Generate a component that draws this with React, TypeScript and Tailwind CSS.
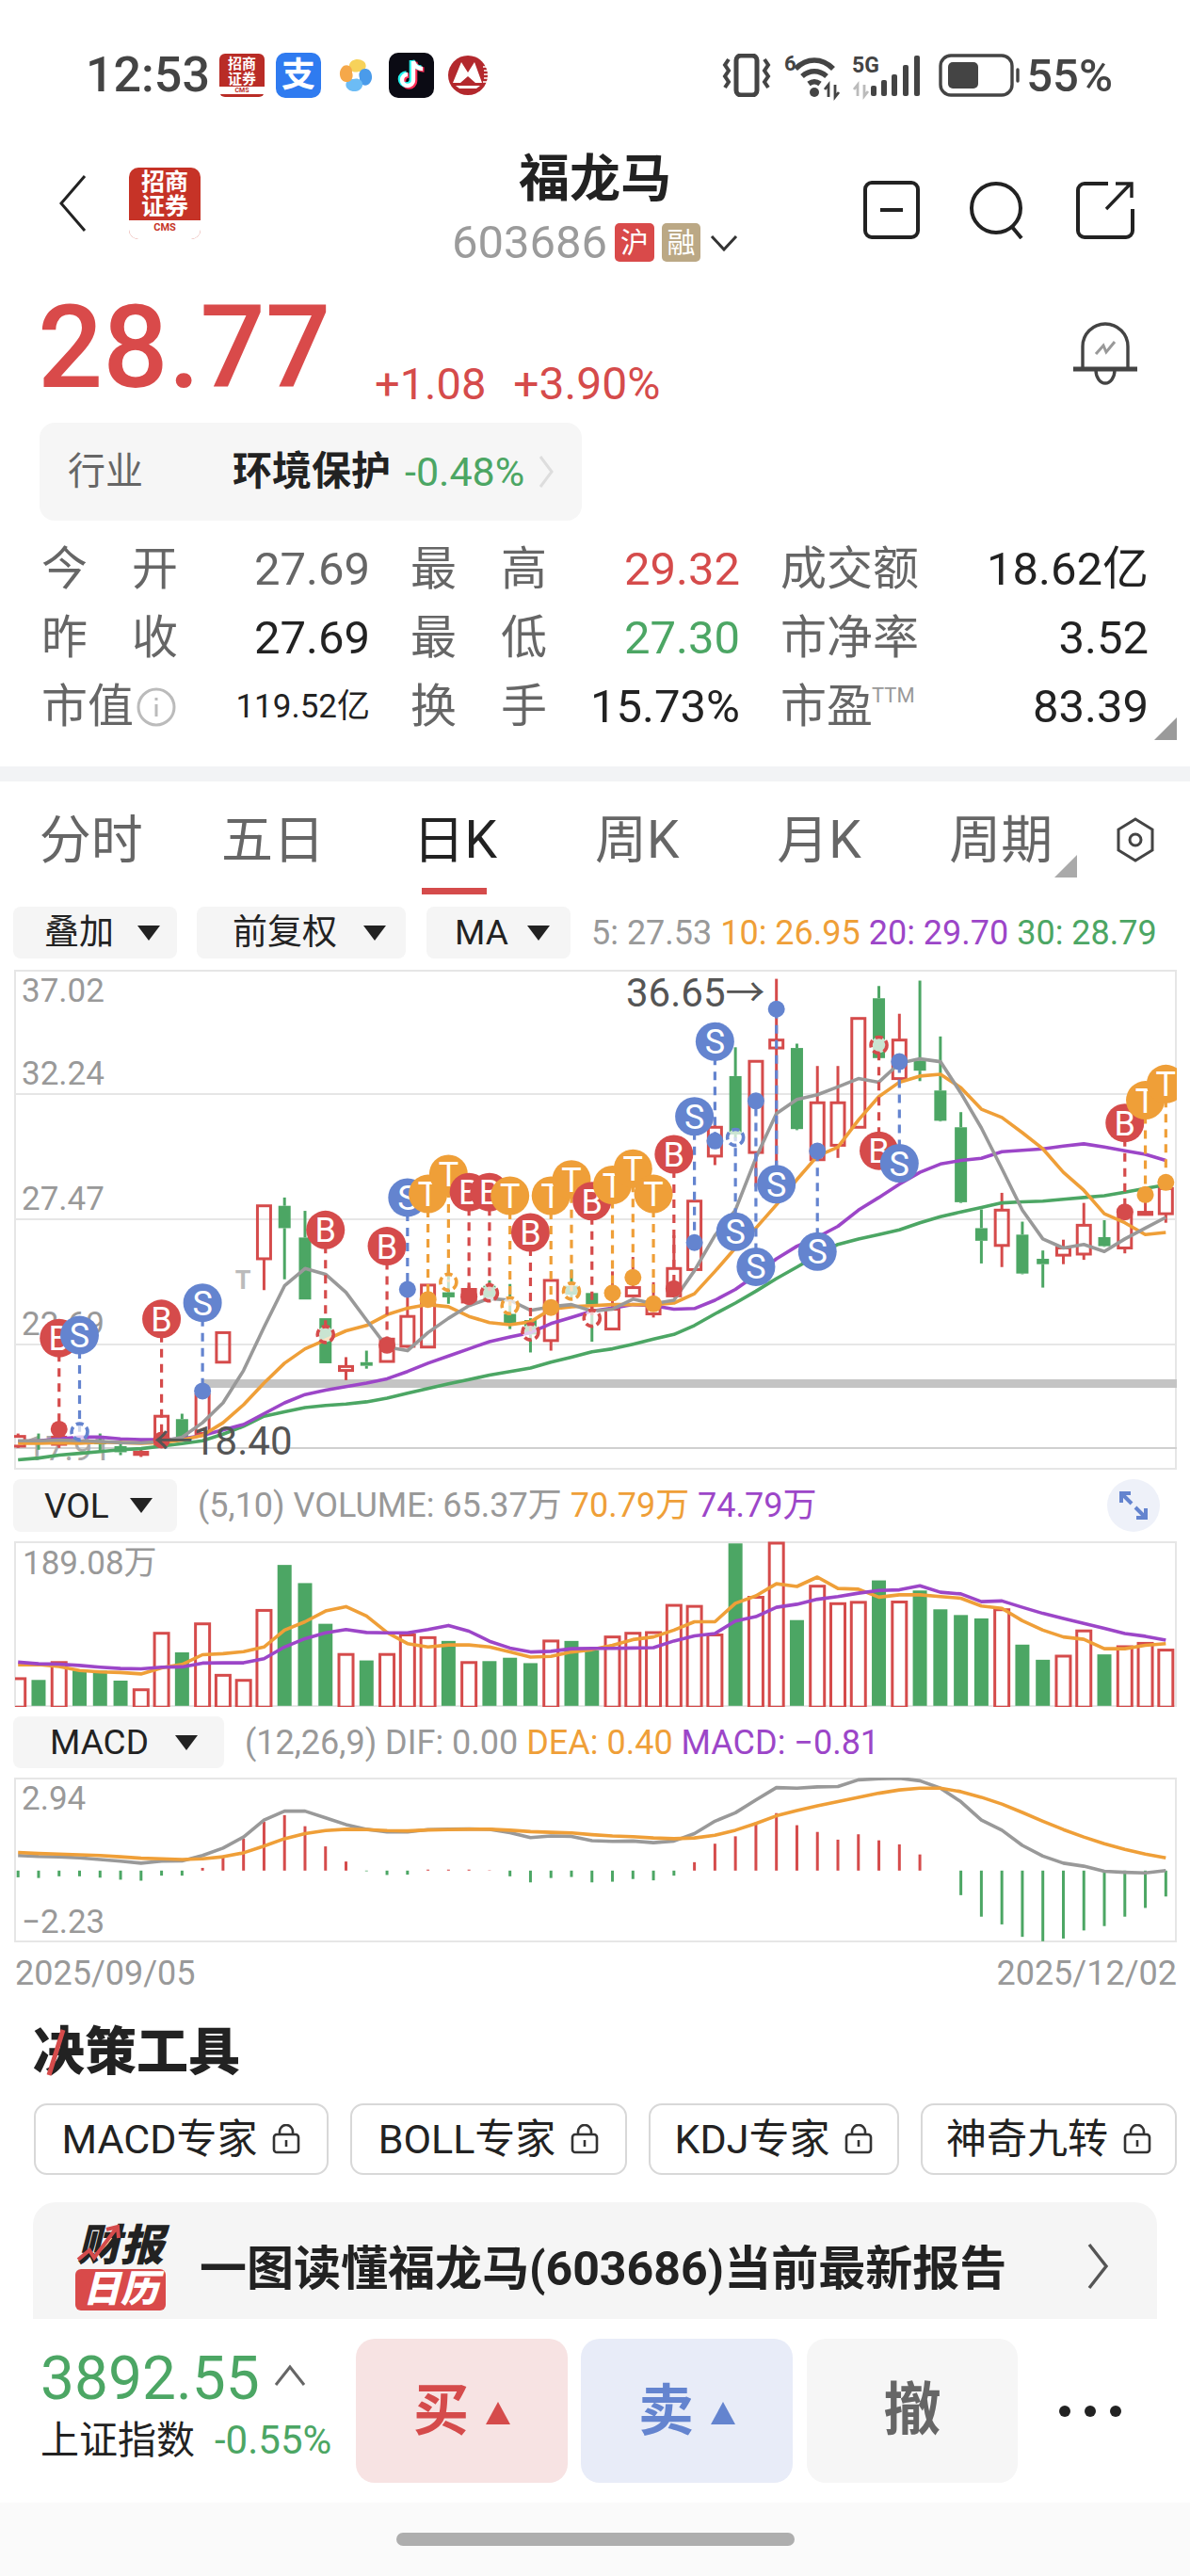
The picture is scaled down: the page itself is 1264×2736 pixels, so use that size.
import * as React from 'react';

const RED = '#d54b4b';
const GREEN = '#4ca664';
const BLUE = '#6484cf';
const ORANGE = '#ef9f38';
const PURPLE = '#9c46c8';
const GREY = '#999999';

// y values below were read off the picture, converted to page pixels here
const cx = (i: number) => 19.2 + 21.77 * i;
const py = (y: number) => 960 + y / 2.613;
const vy = (y: number) => 1560 + y / 2.8;

// index, colour, wick top, body top, body bottom, wick bottom
type Candle = [number, 'r' | 'g', number, number, number, number];
const candles: Candle[] = [
    [0, 'r', 1470, 1478, 1505, 1510],
    [1, 'g', 1470, 1490, 1497, 1515],
    [2, 'r', 1470, 1480, 1500, 1510],
    [4, 'g', 1470, 1490, 1500, 1520],
    [5, 'g', 1490, 1505, 1522, 1530],
    [6, 'r', 1510, 1522, 1528, 1535],
    [7, 'r', 1420, 1422, 1500, 1505],
    [8, 'g', 1415, 1430, 1480, 1485],
    [9, 'r', 1360, 1362, 1470, 1472],
    [10, 'r', 1190, 1190, 1272, 1272],
    [12, 'r', 838, 838, 985, 1072],
    [13, 'g', 815, 838, 900, 1042],
    [14, 'g', 852, 926, 1098, 1098],
    [15, 'g', 1150, 1150, 1275, 1275],
    [16, 'r', 1258, 1284, 1295, 1322],
    [17, 'g', 1240, 1272, 1282, 1290],
    [18, 'r', 1205, 1208, 1270, 1272],
    [19, 'r', 1090, 1145, 1228, 1232],
    [20, 'r', 1058, 1058, 1230, 1230],
    [21, 'g', 1000, 1078, 1092, 1110],
    [22, 'r', 1060, 1070, 1105, 1110],
    [23, 'g', 1045, 1060, 1095, 1105],
    [24, 'g', 1055, 1138, 1165, 1180],
    [25, 'g', 1150, 1155, 1195, 1245],
    [26, 'r', 1045, 1045, 1212, 1240],
    [27, 'g', 1015, 1060, 1085, 1095],
    [28, 'g', 1080, 1080, 1112, 1215],
    [29, 'r', 1020, 1125, 1180, 1182],
    [30, 'r', 980, 1065, 1088, 1090],
    [31, 'r', 1050, 1115, 1138, 1148],
    [32, 'r', 920, 1012, 1088, 1092],
    [33, 'r', 825, 825, 1015, 1017],
    [34, 'r', 600, 620, 700, 725],
    [35, 'g', 398, 478, 640, 650],
    [36, 'r', 437, 437, 690, 785],
    [37, 'r', 208, 378, 400, 725],
    [38, 'g', 388, 400, 625, 628],
    [39, 'r', 450, 552, 710, 712],
    [40, 'r', 450, 552, 670, 705],
    [41, 'r', 318, 318, 620, 622],
    [42, 'g', 228, 262, 428, 432],
    [43, 'r', 305, 378, 485, 498],
    [44, 'g', 213, 435, 463, 492],
    [45, 'g', 368, 518, 602, 604],
    [46, 'g', 578, 620, 828, 830],
    [47, 'g', 848, 900, 935, 998],
    [48, 'r', 802, 850, 948, 1008],
    [49, 'g', 882, 918, 1026, 1028],
    [50, 'g', 962, 985, 1000, 1065],
    [51, 'r', 932, 955, 975, 1000],
    [52, 'r', 830, 892, 972, 988],
    [53, 'g', 878, 925, 950, 952],
    [54, 'r', 850, 855, 955, 970],
    [55, 'r', 810, 856, 862, 865],
    [56, 'r', 770, 790, 860, 885],
];

const ma5 = [1490, 1490, 1488, 1490, 1492, 1495, 1496, 1492, 1480, 1440, 1385, 1295, 1175, 1060, 1012, 1028, 1078, 1155, 1230, 1240, 1190, 1150, 1115, 1095, 1100, 1128, 1118, 1112, 1130, 1125, 1097, 1110, 1100, 1018, 920, 850, 705, 582, 543, 530, 508, 485, 495, 442, 430, 438, 525, 622, 735, 850, 930, 955, 945, 965, 930, 900, 870];
const ma10 = [1497, 1497, 1496, 1497, 1494, 1495, 1497, 1495, 1488, 1475, 1440, 1390, 1330, 1275, 1235, 1210, 1185, 1170, 1140, 1122, 1112, 1118, 1145, 1162, 1168, 1160, 1125, 1118, 1115, 1112, 1112, 1112, 1108, 1082, 1020, 955, 900, 835, 765, 700, 675, 600, 535, 495, 478, 473, 510, 570, 593, 635, 680, 745, 795, 860, 885, 918, 912];
const ma20 = [1492, 1490, 1485, 1480, 1480, 1485, 1487, 1487, 1485, 1475, 1460, 1445, 1415, 1385, 1362, 1350, 1340, 1330, 1318, 1298, 1275, 1255, 1235, 1215, 1202, 1190, 1165, 1148, 1130, 1122, 1112, 1115, 1125, 1123, 1100, 1070, 1030, 985, 950, 925, 895, 850, 815, 778, 745, 722, 712, 706, 688, 684, 680, 672, 666, 675, 685, 695, 712];
const ma30 = [1543, 1538, 1530, 1525, 1520, 1515, 1512, 1505, 1498, 1490, 1472, 1450, 1422, 1410, 1398, 1392, 1388, 1382, 1372, 1358, 1345, 1332, 1320, 1308, 1298, 1288, 1272, 1258, 1243, 1235, 1222, 1208, 1195, 1170, 1138, 1108, 1075, 1040, 1008, 975, 945, 930, 918, 905, 885, 868, 855, 843, 830, 827, 825, 820, 815, 810, 800, 790, 780];

// index, letter, badge centre, dot centre, hollow dot
type Badge = [number, 'B' | 'S' | 'T', number, number, boolean];
const badges: Badge[] = [
    [2, 'B', 1205, 1458, false],
    [3, 'S', 1197, 1465, true],
    [7, 'B', 1152, 1488, false],
    [9, 'S', 1107, 1352, false],
    [15, 'B', 905, 1195, true],
    [18, 'B', 950, 1225, false],
    [19, 'S', 815, 1070, false],
    [20, 'T', 805, 1098, false],
    [21, 'T', 750, 1050, true],
    [22, 'B', 800, 1090, false],
    [23, 'B', 800, 1080, true],
    [24, 'T', 810, 1115, true],
    [25, 'B', 912, 1188, true],
    [26, 'T', 810, 1120, false],
    [27, 'T', 765, 1075, true],
    [28, 'B', 825, 1150, true],
    [29, 'T', 780, 1080, false],
    [30, 'T', 735, 1037, false],
    [31, 'T', 805, 1110, false],
    [32, 'B', 695, 1068, false],
    [33, 'S', 590, 940, false],
    [34, 'S', 382, 658, false],
    [35, 'S', 910, 648, true],
    [36, 'S', 1007, 547, false],
    [37, 'S', 778, 292, false],
    [39, 'S', 965, 686, false],
    [42, 'B', 685, 392, true],
    [43, 'S', 720, 438, false],
    [54, 'B', 608, 855, false],
    [55, 'T', 545, 807, false],
    [56, 'T', 500, 773, false],
];

const volTops = [620, 628, 572, 600, 600, 630, 653, 485, 546, 457, 610, 625, 417, 286, 340, 461, 548, 570, 548, 490, 498, 512, 572, 572, 562, 578, 508, 512, 540, 496, 485, 483, 402, 405, 490, 222, 378, 217, 450, 345, 397, 393, 332, 392, 362, 418, 435, 445, 415, 523, 568, 553, 478, 552, 525, 515, 535];
const volGreen = [1, 3, 4, 5, 8, 13, 14, 15, 17, 21, 23, 24, 25, 27, 28, 35, 38, 42, 44, 45, 46, 47, 49, 50, 53];
const volMa5 = [583, 582, 588, 600, 604, 606, 610, 592, 582, 553, 550, 544, 530, 480, 455, 423, 410, 438, 487, 520, 530, 524, 524, 530, 545, 560, 558, 545, 538, 525, 508, 500, 480, 455, 455, 400, 378, 342, 350, 322, 356, 358, 382, 375, 375, 380, 385, 408, 415, 452, 480, 500, 507, 535, 535, 525, 520];
const volMa10 = [575, 580, 581, 585, 590, 594, 595, 590, 589, 578, 577, 577, 565, 530, 505, 488, 478, 487, 488, 488, 478, 466, 483, 513, 533, 545, 543, 535, 534, 534, 533, 532, 512, 497, 490, 453, 440, 412, 403, 388, 380, 370, 362, 360, 348, 367, 372, 395, 393, 412, 430, 445, 460, 475, 490, 498, 510];

const macdBars = [1215, 1217, 1212, 1212, 1216, 1222, 1225, 1210, 1210, 1187, 1150, 1100, 1050, 1030, 1063, 1123, 1168, 1197, 1208, 1207, 1192, 1192, 1192, 1194, 1212, 1230, 1217, 1214, 1230, 1228, 1220, 1224, 1210, 1170, 1115, 1093, 1052, 1024, 1060, 1080, 1103, 1087, 1105, 1117, 1147, 1195, 1268, 1332, 1355, 1392, 1405, 1397, 1373, 1360, 1332, 1306, 1272];
const dif = [1150, 1153, 1154, 1157, 1162, 1167, 1173, 1167, 1166, 1150, 1128, 1095, 1045, 1018, 1018, 1038, 1058, 1072, 1080, 1080, 1073, 1072, 1071, 1072, 1082, 1097, 1092, 1093, 1106, 1108, 1107, 1112, 1107, 1085, 1048, 1023, 985, 948, 950, 946, 945, 925, 922, 920, 928, 950, 990, 1045, 1075, 1120, 1152, 1173, 1182, 1197, 1200, 1202, 1195];
const dea = [1141, 1144, 1146, 1148, 1150, 1154, 1158, 1160, 1162, 1160, 1154, 1142, 1122, 1100, 1085, 1076, 1072, 1073, 1076, 1077, 1074, 1073, 1072, 1072, 1075, 1079, 1081, 1083, 1088, 1092, 1094, 1098, 1100, 1098, 1090, 1075, 1055, 1032, 1016, 1002, 990, 977, 965, 955, 950, 950, 960, 977, 997, 1022, 1048, 1073, 1095, 1115, 1132, 1146, 1157];

const points = (ys: number[], conv: (y: number) => number) =>
    ys.map((y, i) => cx(i).toFixed(1) + ',' + conv(y).toFixed(1)).join(' ');

const Line = (props: { ys: number[]; conv: (y: number) => number; color: string }) => (
    <polyline points={points(props.ys, props.conv)} fill="none" stroke={props.color} strokeWidth={3.6} strokeLinejoin="round" />
);

const Caret = () => (
    <svg width="24" height="16" viewBox="0 0 24 16"><path d="M0 0h24L12 16z" fill="#222" /></svg>
);

const Lock = () => (
    <svg width="30" height="32" viewBox="0 0 30 32" fill="none" stroke="#333" strokeWidth="2.6" className="ml-[16px]">
        <rect x="2" y="11" width="26" height="19" rx="3" />
        <path d="M8 11V8a7 7 0 0 1 14 0v3" />
        <path d="M15 17v7" />
    </svg>
);

const Dropdown = (props: { label: string; className: string; caretGap: string }) => (
    <div className={'flex items-center h-[55px] bg-[#f5f5f5] rounded-[8px] text-[37px] text-[#222] ' + props.className}>
        <span className="leading-none">{props.label}</span>
        <span className={props.caretGap}><Caret /></span>
    </div>
);

const petal = 'M21 14C16 16 10 13 11 7c1-6 10-8 15-4 4 3 3 8 0 10-2 1-3 1-5 1z';

const StatusBar = () => (
    <div className="h-[160px] flex items-center pl-[91px] pr-[82px] text-[#444]">
        <span className="text-[52px] font-medium w-[142px] leading-none">12:53</span>
        <div className="w-[48px] h-[46px] bg-[#b92c26] rounded-[6px] flex flex-col items-center justify-center text-white text-[15px] leading-[16px] font-bold">
            <span>招商</span>
            <span>证券</span>
            <span className="text-[7px] leading-[8px] text-[#b92c26] bg-white w-full text-center">CMS</span>
        </div>
        <div className="ml-[12px] w-[48px] h-[48px] bg-[#2f7bf0] rounded-[10px] flex items-center justify-center text-white text-[36px] font-bold leading-none">支</div>
        <svg width="36" height="36" viewBox="0 0 36 36" className="ml-[19px]">
            <path d={petal} fill="#f7d25a" />
            <path d={petal} fill="#4a9bea" transform="rotate(90 18 18)" />
            <path d={petal} fill="#6cbcf5" transform="rotate(180 18 18)" />
            <path d={petal} fill="#f5a84a" transform="rotate(270 18 18)" />
        </svg>
        <svg width="48" height="48" viewBox="0 0 48 48" className="ml-[17px]">
            <rect width="48" height="48" rx="10" fill="#0b0b14" />
            <path d="M26 9v20a6 6 0 1 1-6-6M26 9c1 5 5 8 10 8" fill="none" stroke="#fe2c55" strokeWidth="5.6" transform="translate(1.5 1)" />
            <path d="M26 9v20a6 6 0 1 1-6-6M26 9c1 5 5 8 10 8" fill="none" stroke="#25f4ee" strokeWidth="5.6" transform="translate(-1.5 -1)" />
            <path d="M26 9v20a6 6 0 1 1-6-6M26 9c1 5 5 8 10 8" fill="none" stroke="#fff" strokeWidth="4.4" />
        </svg>
        <svg width="42" height="42" viewBox="0 0 42 42" className="ml-[15px]">
            <circle cx="21" cy="21" r="21" fill="#b3282d" />
            <path d="M5 29 14 7l7 11 7-11 8 22H29l-8-7-8 7z" fill="#fff" />
            <path d="M8 32h26l-4 3H12z" fill="#fff" />
            <path d="M37 12h5M38 16h4M38 20h4M38 24h4M37 28h4" stroke="#fff" strokeWidth="1.6" />
        </svg>
        <div className="flex-1" />
        <svg width="52" height="46" viewBox="0 0 52 46" fill="none" stroke="#444" strokeWidth="3.6">
            <rect x="15" y="2" width="22" height="42" rx="5" strokeWidth="5" />
            <path d="M7 6 3 12l4 6-4 6 4 6-4 6M45 6l4 6-4 6 4 6-4 6 4 6" strokeWidth="4" />
        </svg>
        <svg width="64" height="46" viewBox="0 0 64 46" fill="none" stroke="#444" className="ml-[13px] overflow-visible">
            <path d="M13 16c12-12 28-12 40 0M20 24c8-7 18-7 26 0M27 32c4-3 8-3 12 0" strokeWidth="5.6" />
            <circle cx="33" cy="41" r="5" fill="#444" stroke="none" />
            <text x="1" y="18" fontSize="22" fontWeight="700" fill="#444" stroke="none">6</text>
            <path d="M48 46V33l-4 5M55 33v13l4-5" strokeWidth="2.8" />
        </svg>
        <svg width="74" height="46" viewBox="0 0 74 46" className="ml-[9px] overflow-visible" fill="#444">
            <text x="0" y="20" fontSize="23" fontWeight="700">5G</text>
            <path d="M6 45V33l-4 5M13 33v12l4-5" stroke="#bbb" strokeWidth="2.8" fill="none" />
            <rect x="20" y="34" width="6" height="11" rx="2" />
            <rect x="31" y="28" width="6" height="17" rx="2" />
            <rect x="42" y="22" width="6" height="23" rx="2" />
            <rect x="54" y="12" width="6" height="33" rx="2" />
            <rect x="66" y="2" width="6" height="43" rx="2" />
        </svg>
        <svg width="87" height="46" viewBox="0 0 87 46" className="ml-[18px]" fill="none">
            <rect x="2" y="2" width="76" height="42" rx="11" stroke="#444" strokeWidth="3.4" />
            <rect x="10" y="9" width="32" height="28" rx="5" fill="#444" />
            <path d="M84 17v12" stroke="#444" strokeWidth="3.4" strokeLinecap="round" />
        </svg>
        <span className="ml-[6px] text-[49px] leading-none font-medium whitespace-nowrap">55%</span>
    </div>
);

const Header = () => (
    <div className="h-[125px] grid grid-cols-[1fr_auto_1fr] items-center">
        <div className="flex items-center pl-[62px] -mt-[14px]">
            <svg width="30" height="62" viewBox="0 0 30 62" fill="none" stroke="#222" strokeWidth="3">
                <path d="M28 2 3 31l25 29" />
            </svg>
            <div className="ml-[45px] w-[76px] h-[76px] rounded-[10px] bg-[#c63327] flex flex-col items-center text-white text-[25px] leading-[26px] font-bold pt-[3px] overflow-hidden">
                <span>招商</span>
                <span>证券</span>
                <span className="mt-[1px] w-full flex-1 bg-white text-[#c63327] text-[11px] leading-[15px] text-center">CMS</span>
            </div>
        </div>
        <div className="flex flex-col items-center -mt-[6px]">
            <span className="text-[54px] leading-[60px] font-bold text-[#222]">福龙马</span>
            <div className="flex items-center mt-[16px] h-[42px]">
                <span className="text-[49px] leading-none text-[#9b9b9b]">603686</span>
                <span className="ml-[8px] w-[42px] h-[41px] rounded-[5px] bg-[#d94a4a] text-white text-[30px] leading-[41px] text-center">沪</span>
                <span className="ml-[8px] w-[41px] h-[41px] rounded-[5px] bg-[#bba885] text-white text-[30px] leading-[41px] text-center">融</span>
                <svg width="30" height="18" viewBox="0 0 30 18" fill="none" stroke="#333" strokeWidth="3" className="ml-[10px]">
                    <path d="M2 2l13 14L28 2" />
                </svg>
            </div>
        </div>
        <div className="flex items-center justify-end pr-[59px]">
            <svg width="60" height="62" viewBox="0 0 60 62" fill="none" stroke="#222" strokeWidth="4">
                <rect x="2" y="2" width="56" height="58" rx="7" />
                <path d="M18 31h24" />
            </svg>
            <svg width="60" height="62" viewBox="0 0 60 62" fill="none" stroke="#222" strokeWidth="4" className="ml-[52px]">
                <circle cx="29" cy="29" r="26" />
                <path d="M46 49l10 12" />
            </svg>
            <svg width="62" height="62" viewBox="0 0 62 62" fill="none" stroke="#222" strokeWidth="4" className="ml-[54px]">
                <path d="M34 3H9a7 7 0 0 0-7 7v43a7 7 0 0 0 7 7h44a7 7 0 0 0 7-7V30" />
                <path d="M32 30 58 3M42 3h17v15" strokeWidth="3.4" />
            </svg>
        </div>
    </div>
);

const PriceRow = () => (
    <div className="relative h-[164px] pt-[35px] flex items-start pl-[40px]">
        <span className="text-[122px] leading-[100px] font-medium text-[#d94a4a] w-[358px]">28.77</span>
        <span className="mt-[64px] text-[47px] leading-[48px] text-[#d54b4b]">+1.08</span>
        <span className="ml-[29px] mt-[64px] text-[48px] leading-[48px] text-[#d54b4b]">+3.90%</span>
        <svg width="72" height="70" viewBox="0 0 72 70" fill="none" stroke="#444" strokeWidth="3.4" className="absolute left-[1138px] top-[57px]">
            <path d="M12 50V26a24 24 0 0 1 48 0v24" />
            <path d="M2 50h68" strokeWidth="5" />
            <path d="M26 34l8-9 3 7 9-11" stroke="#999" strokeWidth="3" />
            <path d="M26 51a10 14 0 0 0 20 0" />
        </svg>
    </div>
);

const IndustryPill = () => (
    <div className="ml-[42px] w-[576px] h-[104px] rounded-[16px] bg-[#f6f6f6] flex items-center relative">
        <span className="ml-[30px] text-[40px] leading-none text-[#666]">行业</span>
        <span className="ml-[95px] text-[42px] leading-none font-bold text-[#222]">环境保护</span>
        <span className="ml-[15px] text-[43px] leading-none text-[#4ca664]">-0.48%</span>
        <svg width="16" height="36" viewBox="0 0 16 36" fill="none" stroke="#ddd" strokeWidth="3" className="ml-[15px]">
            <path d="M2 2l12 16L2 34" />
        </svg>
    </div>
);

const Label = (props: { a: string; b: string }) => (
    <span className="flex justify-between w-[145px] text-[#666]"><span>{props.a}</span><span>{props.b}</span></span>
);

const Stats = () => (
    <div className="relative mt-[15px] h-[219px] px-[44px] text-[49px] leading-[73px] text-[#222] flex flex-col">
        <div className="flex h-[73px]">
            <div className="w-[349px] flex justify-between"><Label a="今" b="开" /><span className="text-[#666]">27.69</span></div>
            <div className="ml-[43px] w-[350px] flex justify-between"><Label a="最" b="高" /><span className="text-[#d54b4b]">29.32</span></div>
            <div className="ml-[43px] w-[391px] flex justify-between"><span className="text-[#666]">成交额</span><span>18.62亿</span></div>
        </div>
        <div className="flex h-[73px]">
            <div className="w-[349px] flex justify-between"><Label a="昨" b="收" /><span>27.69</span></div>
            <div className="ml-[43px] w-[350px] flex justify-between"><Label a="最" b="低" /><span className="text-[#4ca664]">27.30</span></div>
            <div className="ml-[43px] w-[391px] flex justify-between"><span className="text-[#666]">市净率</span><span>3.52</span></div>
        </div>
        <div className="flex h-[73px]">
            <div className="w-[349px] flex justify-between items-center">
                <span className="flex items-center text-[#666]">市值
                    <svg width="44" height="44" viewBox="0 0 44 44" fill="none" stroke="#bbb" strokeWidth="3" className="ml-[2px]">
                        <circle cx="22" cy="22" r="19" />
                        <path d="M22 19v13M22 12v3" />
                    </svg>
                </span>
                <span className="text-[35px]">119.52亿</span>
            </div>
            <div className="ml-[43px] w-[350px] flex justify-between"><Label a="换" b="手" /><span>15.73%</span></div>
            <div className="ml-[43px] w-[391px] flex justify-between">
                <span className="text-[#666] flex items-start">市盈<span className="text-[22px] leading-[50px] text-[#999] -ml-[1px]">TTM</span></span>
                <span>83.39</span>
            </div>
        </div>
        <svg width="24" height="24" viewBox="0 0 24 24" className="absolute right-[14px] bottom-[1px]"><path d="M24 0v24H0z" fill="#9a9a9a" /></svg>
    </div>
);

const Tabs = () => (
    <div className="relative h-[130px] pb-[6px] flex items-center">
        <div className="w-[1160px] grid grid-cols-6 text-center text-[55px] leading-none text-[#666]">
            <span>分时</span>
            <span>五日</span>
            <span className="text-[#222] relative">日K
                <span className="absolute left-[61px] right-[63px] top-[78px] h-[7px] bg-[#d54b4b]" />
            </span>
            <span>周K</span>
            <span>月K</span>
            <span>周期</span>
        </div>
        <svg width="24" height="24" viewBox="0 0 24 24" className="absolute left-[1120px] top-[78px]"><path d="M24 0v24H0z" fill="#aaa" /></svg>
        <svg width="42" height="50" viewBox="0 0 42 50" fill="none" stroke="#444" strokeWidth="3" className="ml-[25px]">
            <path d="M21 3 39 14v22L21 47 3 36V14z" />
            <circle cx="21" cy="25" r="6" />
        </svg>
    </div>
);

const MainChart = () => (
    <svg width="1235" height="531" viewBox="15 1030 1235 531" className="block ml-[15px] mt-[12px]">
        <rect x="16" y="1031" width="1233" height="529" fill="none" stroke="#e6e6e6" strokeWidth="2" />
        {[1162, 1295, 1428, 1538].map(y => (
            <line key={y} x1="15" x2="1250" y1={y} y2={y} stroke={y === 1538 ? '#d0d0d0' : '#e6e6e6'} strokeWidth="2" />
        ))}
        <rect x="215" y="1465" width="1035" height="9" fill="#c4c4c4" />
        <g fontSize="35" fill="#999">
            <text x="23" y="1064">37.02</text>
            <text x="23" y="1152">32.24</text>
            <text x="23" y="1285">27.47</text>
            <text x="23" y="1418">22.69</text>
        </g>
        <text x="28" y="1551" fontSize="36" fill="#aaa">17.91</text>
        <text x="258" y="1369" fontSize="27" fontWeight="700" fill="#bbb" textAnchor="middle">T</text>
        {candles.map(([i, c, wt, bt, bb, wb]) => {
            const color = c === 'r' ? RED : GREEN;
            const x = cx(i);
            return (
                <g key={i}>
                    <line x1={x} x2={x} y1={py(wt)} y2={py(bt)} stroke={color} strokeWidth="3" />
                    <line x1={x} x2={x} y1={py(bb)} y2={py(wb)} stroke={color} strokeWidth="3" />
                    {c === 'r'
                        ? <rect x={x - 7} y={py(bt)} width="14" height={py(bb) - py(bt)} fill="none" stroke={color} strokeWidth="3" />
                        : <rect x={x - 6.5} y={py(bt)} width="13" height={py(bb) - py(bt)} fill={color} />}
                </g>
            );
        })}
        <Line ys={ma30} conv={py} color={GREEN} />
        <Line ys={ma20} conv={py} color={PURPLE} />
        <Line ys={ma10} conv={py} color={ORANGE} />
        <Line ys={ma5} conv={py} color={GREY} />
        {badges.map(([i, letter, by, dy, hollow]) => {
            const color = letter === 'B' ? RED : letter === 'S' ? BLUE : ORANGE;
            const x = cx(i);
            return (
                <g key={i}>
                    <line x1={x} x2={x} y1={py(by)} y2={py(dy)} stroke={color} strokeWidth="3.2" strokeDasharray="9 7" />
                    {hollow
                        ? <circle cx={x} cy={py(dy)} r="8.5" fill="#fff" fillOpacity="0.7" stroke={color} strokeWidth="3.6" strokeDasharray="8 4" />
                        : <circle cx={x} cy={py(dy)} r="9" fill={color} />}
                    <circle cx={x} cy={py(by)} r="20.5" fill={color} />
                    <text x={x} y={py(by) + 13} fontSize="36" fill="#fff" textAnchor="middle">{letter}</text>
                </g>
            );
        })}
        <text x="665" y="1069" fontSize="42" fill="#555">36.65→</text>
        <text x="163" y="1545" fontSize="42" fill="#555">←18.40</text>
    </svg>
);

const VolChart = () => (
    <svg width="1235" height="176" viewBox="15 1637 1235 176" className="block ml-[15px] mt-[10px]">
        <defs>
            <clipPath id="volclip"><rect x="16" y="1637" width="1233" height="176" /></clipPath>
        </defs>
        <rect x="16" y="1638" width="1233" height="174" fill="none" stroke="#e6e6e6" strokeWidth="2" />
        <g clipPath="url(#volclip)">
            <text x="24" y="1672" fontSize="35" fill="#999">189.08万</text>
            {volTops.map((t, i) => volGreen.includes(i)
                ? <rect key={i} x={cx(i) - 7.5} y={vy(t)} width="15" height={vy(705) - vy(t)} fill={GREEN} />
                : <rect key={i} x={cx(i) - 7.5} y={vy(t) + 1.5} width="15" height={vy(705) - vy(t)} fill="none" stroke={RED} strokeWidth="3" />)}
            <Line ys={volMa5} conv={vy} color={ORANGE} />
            <Line ys={volMa10} conv={vy} color={PURPLE} />
        </g>
    </svg>
);

const MacdChart = () => (
    <svg width="1235" height="175" viewBox="15 1888 1235 175" className="block ml-[15px] mt-[10px]">
        <rect x="16" y="1889" width="1233" height="173" fill="none" stroke="#e6e6e6" strokeWidth="2" />
        <text x="23" y="1922" fontSize="35" fill="#999">2.94</text>
        <text x="23" y="2053" fontSize="35" fill="#999">−2.23</text>
        {macdBars.map((y, i) => (
            <line key={i} x1={cx(i)} x2={cx(i)} y1={vy(1195)} y2={vy(y)} stroke={y < 1195 ? RED : GREEN} strokeWidth="3" />
        ))}
        <Line ys={dif} conv={vy} color={GREY} />
        <Line ys={dea} conv={vy} color={ORANGE} />
    </svg>
);

const ChartArea = () => (
    <div>
        <div className="flex items-center pt-[3px] h-[58px] pl-[14px]">
            <Dropdown label="叠加" className="w-[174px] pl-[33px]" caretGap="ml-[25px]" />
            <Dropdown label="前复权" className="ml-[21px] w-[222px] pl-[38px]" caretGap="ml-[28px]" />
            <Dropdown label="MA" className="ml-[22px] w-[153px] pl-[30px]" caretGap="ml-[20px]" />
            <span className="ml-[22px] text-[36px] leading-none whitespace-nowrap">
                <span className="text-[#999]">5: 27.53</span>{' '}
                <span className="text-[#ef9f38]">10: 26.95</span>{' '}
                <span className="text-[#9c46c8]">20: 29.70</span>{' '}
                <span className="text-[#4ca664]">30: 28.79</span>
            </span>
        </div>
        <MainChart />
        <div className="flex items-center mt-[10px] h-[56px] pl-[14px] relative">
            <Dropdown label="VOL" className="w-[174px] pl-[33px] h-[56px]" caretGap="ml-[22px]" />
            <span className="ml-[22px] text-[36px] leading-none whitespace-nowrap">
                <span className="text-[#999]">(5,10) VOLUME: 65.37万</span>{' '}
                <span className="text-[#ef9f38]">70.79万</span>{' '}
                <span className="text-[#9c46c8]">74.79万</span>
            </span>
            <div className="absolute left-[1176px] top-0 w-[56px] h-[56px] rounded-full bg-[#eef1f9] flex items-center justify-center">
                <svg width="34" height="34" viewBox="0 0 34 34" fill="none" stroke="#6484cf" strokeWidth="4">
                    <path d="M4 14V4h10M4 4l11 11M30 20v10H20M30 30 19 19" />
                </svg>
            </div>
        </div>
        <VolChart />
        <div className="flex items-center mt-[10px] h-[55px] pl-[14px]">
            <Dropdown label="MACD" className="w-[224px] pl-[39px]" caretGap="ml-[28px]" />
            <span className="ml-[22px] text-[36px] leading-none whitespace-nowrap">
                <span className="text-[#999]">(12,26,9) DIF: 0.00</span>{' '}
                <span className="text-[#ef9f38]">DEA: 0.40</span>{' '}
                <span className="text-[#9c46c8]">MACD: −0.81</span>
            </span>
        </div>
        <MacdChart />
        <div className="h-[66px] flex items-center justify-between pl-[16px] pr-[14px] text-[36px] text-[#999] leading-none">
            <span>2025/09/05</span>
            <span>2025/12/02</span>
        </div>
    </div>
);

const tools = [
    { name: 'MACD专家', w: 'w-[313px]' },
    { name: 'BOLL专家', w: 'w-[294px]' },
    { name: 'KDJ专家', w: 'w-[266px]' },
    { name: '神奇九转', w: 'w-[272px]' },
];

const DecisionTools = () => (
    <div>
        <div className="relative h-[100px] pl-[35px] flex items-center text-[55px] leading-none font-black text-[#222]">
            决策工具
            <svg width="22" height="50" viewBox="0 0 22 50" className="absolute left-[48px] top-[26px]">
                <path d="M19 1 4 49" stroke="#d54b4b" strokeWidth="5" />
            </svg>
        </div>
        <div className="mt-[5px] pl-[36px] flex gap-[23px]">
            {tools.map(t => (
                <div key={t.name} className={'h-[76px] border-2 border-[#d8d8d8] rounded-[14px] flex items-center justify-center text-[43px] leading-none text-[#222] ' + t.w}>
                    {t.name}<Lock />
                </div>
            ))}
        </div>
        <div className="mt-[29px] ml-[35px] w-[1194px] h-[124px] bg-[#f5f5f5] rounded-t-[24px] flex items-center pl-[45px] relative">
            <div className="relative w-[96px] flex flex-col items-center mt-[14px]">
                <span className="text-[46px] leading-[47px] font-black italic text-[#222]">财报</span>
                <span className="mt-[1px] w-[96px] h-[44px] bg-[#d94a4a] rounded-[6px] text-white text-[40px] leading-[44px] font-black italic text-center">日历</span>
                <svg width="50" height="44" viewBox="0 0 50 44" className="absolute left-0 top-0" fill="none" stroke="#d54b4b" strokeWidth="4">
                    <path d="M3 38 15 28l5 8L44 4M33 6l12-3 1 12" />
                </svg>
            </div>
            <span className="ml-[36px] mt-[18px] text-[50px] leading-none font-bold text-[#222] whitespace-nowrap">一图读懂福龙马(603686)当前最新报告</span>
            <svg width="24" height="50" viewBox="0 0 24 50" fill="none" stroke="#555" strokeWidth="3.4" className="absolute left-[1119px] top-[43px]">
                <path d="M3 2l18 23L3 48" />
            </svg>
        </div>
    </div>
);

const BottomBar = () => (
    <div className="h-[195px] flex pt-[21px]">
        <div className="w-[378px] pl-[43px] pt-[10px]">
            <div className="flex items-center">
                <span className="text-[64px] leading-[66px] text-[#4ca664]">3892.55</span>
                <svg width="34" height="24" viewBox="0 0 34 24" fill="none" stroke="#666" strokeWidth="3" className="ml-[15px] -mt-[8px]">
                    <path d="M2 22 17 3l15 19" />
                </svg>
            </div>
            <div className="flex items-center mt-[11px]">
                <span className="text-[41px] leading-none text-[#222]">上证指数</span>
                <span className="ml-[21px] text-[42px] leading-none text-[#4ca664]">-0.55%</span>
            </div>
        </div>
        <div className="w-[225px] h-[153px] rounded-[20px] bg-[#f7e3e3] flex items-center justify-center">
            <span className="text-[59px] leading-none font-bold text-[#d54b4b]">买</span>
            <svg width="26" height="24" viewBox="0 0 26 24" className="ml-[18px] mt-[4px]"><path d="M13 0l13 24H0z" fill="#d54b4b" /></svg>
        </div>
        <div className="ml-[14px] w-[225px] h-[153px] rounded-[20px] bg-[#e8ecf8] flex items-center justify-center">
            <span className="text-[59px] leading-none font-bold text-[#6484cf]">卖</span>
            <svg width="26" height="24" viewBox="0 0 26 24" className="ml-[18px] mt-[4px]"><path d="M13 0l13 24H0z" fill="#6484cf" /></svg>
        </div>
        <div className="ml-[15px] w-[224px] h-[153px] rounded-[20px] bg-[#f6f6f6] flex items-center justify-center text-[61px] leading-none font-bold text-[#666]">撤</div>
        <div className="ml-[44px] w-[66px] h-[153px] flex items-center justify-between">
            <span className="w-[12px] h-[12px] rounded-full bg-[#222]" />
            <span className="w-[12px] h-[12px] rounded-full bg-[#222]" />
            <span className="w-[12px] h-[12px] rounded-full bg-[#222]" />
        </div>
    </div>
);

const App = () => (
    <div className="w-[1264px] h-[2736px] bg-white overflow-hidden [font-family:'Roboto','Noto_Sans_CJK_SC',sans-serif]">
        <StatusBar />
        <Header />
        <PriceRow />
        <IndustryPill />
        <Stats />
        <div className="mt-[27px] h-[16px] bg-[#f2f3f5]" />
        <Tabs />
        <ChartArea />
        <DecisionTools />
        <BottomBar />
        <div className="h-[78px] bg-[#fafafa] flex justify-center pt-[32px]">
            <div className="w-[423px] h-[14px] rounded-full bg-[#aeaeae]" />
        </div>
    </div>
);

export default App;
